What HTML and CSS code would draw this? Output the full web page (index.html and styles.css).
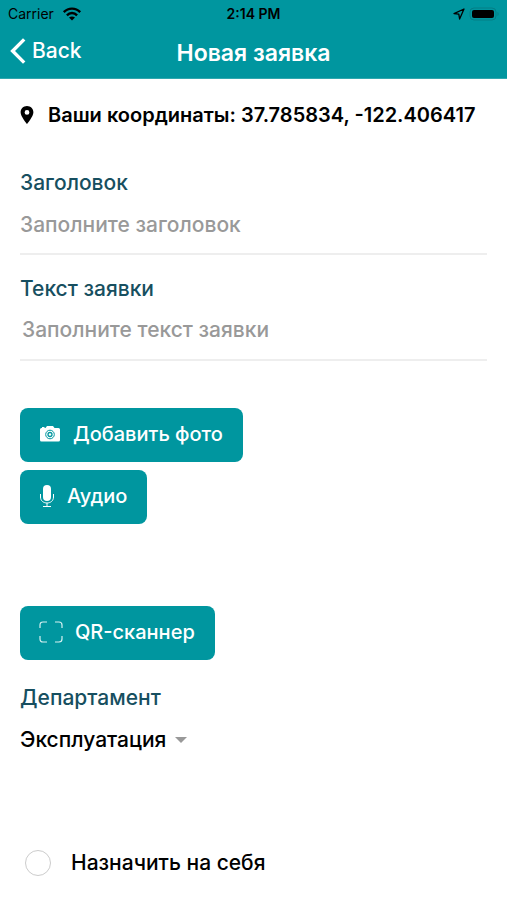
FILE: index.html
```html
<!DOCTYPE html>
<html lang="ru">
<head>
    <meta charset="UTF-8">
    <meta name="viewport" content="width=device-width, initial-scale=1.0">
    <title>Новая заявка</title>
    <link rel="stylesheet" href="styles.css">
</head>
<body>
    <header class="header">
        <div class="status-bar">
            <div class="status-left">
                <span>Carrier</span>
                <svg width="20" height="14" viewBox="0 0 20 14" fill="none" stroke="#000" stroke-width="2.4">
                    <path d="M1.8 5.2C6.4 .4 13.6 .4 18.2 5.2"/>
                    <path d="M4.9 8.3C7.8 5.3 12.2 5.3 15.1 8.3"/>
                    <path d="M10 13.6L7 10.6C8.7 9 11.3 9 13 10.6Z" fill="#000" stroke="none"/>
                </svg>
            </div>
            <span class="status-time">2:14 PM</span>
            <div class="status-right">
                <svg width="12" height="12" viewBox="0 0 12 12" fill="none" stroke="#000" stroke-width="1.3" stroke-linejoin="round">
                    <path d="M11 1L1 5.6L5.8 6.2L6.6 11Z"/>
                </svg>
                <svg width="30" height="14" viewBox="0 0 30 14">
                    <rect x="1" y="1" width="26" height="12" rx="4" fill="none" stroke="#047e86"/>
                    <rect x="3" y="3" width="22" height="8" rx="2" fill="#000"/>
                    <path d="M28.5 5C30 5.5 30 8.5 28.5 9Z" fill="#047e86"/>
                </svg>
            </div>
        </div>
        <nav class="nav-bar">
            <a class="back" href="#">
                <svg width="16" height="26" viewBox="0 0 16 26" fill="none" stroke="#fff" stroke-width="3.4">
                    <path d="M14.2 1.4L2.6 13L14.2 24.6"/>
                </svg>
                <span>Back</span>
            </a>
            <h1>Новая заявка</h1>
        </nav>
    </header>

    <main class="content">
        <div class="location">
            <svg width="14" height="18" viewBox="0 0 14 18">
                <path fill="#000" fill-rule="evenodd" d="M7 0C3.3 0 .6 2.8 .6 6.3C.6 10.6 7 18 7 18S13.4 10.6 13.4 6.3C13.4 2.8 10.7 0 7 0ZM7 4A2.4 2.4 0 1 1 7 8.8A2.4 2.4 0 1 1 7 4Z"/>
            </svg>
            <span>Ваши координаты: 37.785834, -122.406417</span>
        </div>

        <form class="request-form">
            <div class="field">
                <label for="title">Заголовок</label>
                <input type="text" id="title" placeholder="Заполните заголовок">
            </div>
            <div class="field">
                <label for="text">Текст заявки</label>
                <textarea id="text" rows="1" placeholder="Заполните текст заявки"></textarea>
            </div>

            <div class="attachments">
                <button type="button" class="btn">
                    <svg width="22" height="18" viewBox="0 0 22 18">
                        <path fill="#fff" d="M2.5 3H3V2H5.5V3H6.5L8 1H14L15.5 3H19.5Q21 3 21 4.5V15Q21 16.5 19.5 16.5H2.5Q1 16.5 1 15V4.5Q1 3 2.5 3Z"/>
                        <circle cx="11" cy="9.5" r="4.3" fill="none" stroke="#00969f" stroke-width="1"/>
                        <circle cx="11" cy="9.5" r="2" fill="none" stroke="#00969f" stroke-width="1.3"/>
                    </svg>
                    <span>Добавить фото</span>
                </button>
                <button type="button" class="btn">
                    <svg width="16" height="24" viewBox="0 0 16 24">
                        <rect x="4" y="1" width="8" height="16" rx="4" fill="#fff"/>
                        <path d="M1.5 10V13C1.5 21 14.5 21 14.5 13V10M8 19V22.5M4 22.5H12" fill="none" stroke="#fff"/>
                    </svg>
                    <span>Аудио</span>
                </button>
            </div>

            <button type="button" class="btn btn-qr">
                <svg width="24" height="22" viewBox="0 0 24 22" fill="none" stroke="#d5f0f1" stroke-width="1.2">
                    <path d="M1 7V4Q1 1 4 1H8M16 1H20Q23 1 23 4V7M23 15V18Q23 21 20 21H16M8 21H4Q1 21 1 18V15"/>
                </svg>
                <span>QR-сканнер</span>
            </button>

            <div class="department">
                <label for="department">Департамент</label>
                <div class="select-row">
                    <select id="department">
                        <option>Эксплуатация</option>
                    </select>
                    <span class="arrow"></span>
                </div>
            </div>

            <label class="assign">
                <input type="radio" name="assign">
                <span>Назначить на себя</span>
            </label>
        </form>
    </main>
</body>
</html>
```
FILE: styles.css
```css
* {
    box-sizing: border-box;
}
body {
    margin: 0;
    background: #fff;
    color: #000;
    font-family: Inter, "Open Sans", sans-serif;
    font-size: 21px;
    font-weight: 500;
    line-height: 24px;
}
svg {
    flex: none;
}
.header {
    background: #00969f;
    border-bottom: 1px solid #2fa8af;
}
.status-bar {
    display: grid;
    grid-template-columns: 1fr auto 1fr;
    align-items: center;
    height: 27px;
    padding: 0 8px;
    font-size: 14px;
    font-weight: 400;
}
.status-left, .status-right {
    display: flex;
    align-items: center;
    gap: 8px;
}
.status-right {
    justify-content: flex-end;
    gap: 4px;
}
.status-time {
    font-weight: 600;
}
.nav-bar {
    display: grid;
    grid-template-columns: 1fr auto 1fr;
    align-items: center;
    height: 51px;
    padding: 0 10px;
    color: #fff;
}
.back {
    display: flex;
    align-items: center;
    gap: 6px;
    padding-bottom: 4px;
    color: #fff;
    text-decoration: none;
}
h1 {
    margin: 0;
    font-size: 23px;
    font-weight: 600;
}
.content {
    padding: 24px 20px;
}
.location {
    display: flex;
    align-items: center;
    gap: 14px;
    font-size: 20px;
    font-weight: 600;
    white-space: nowrap;
}
.request-form {
    margin-top: 44px;
}
.field {
    display: flex;
    flex-direction: column;
    margin-bottom: 22px;
}
.field label, .department label {
    color: #174f60;
}
.field input, .field textarea {
    width: 100%;
    height: 60px;
    padding: 18px 0;
    border: none;
    border-bottom: 2px solid #eee;
    border-radius: 0;
    outline: none;
    background: none;
    color: #000;
    font: inherit;
    resize: none;
    overflow: hidden;
}
.field textarea {
    padding: 17px 2px;
}
::placeholder {
    color: #999;
    opacity: 1;
}
.attachments {
    display: flex;
    flex-direction: column;
    align-items: flex-start;
    gap: 8px;
    margin-top: 47px;
}
.btn {
    display: flex;
    align-items: center;
    gap: 12px;
    height: 54px;
    padding: 0 20px 3px 19px;
    border: none;
    border-radius: 8px;
    background: #00969f;
    color: #fff;
    font: inherit;
    font-size: 20px;
    cursor: pointer;
}
.btn-qr {
    margin-top: 82px;
}
.department {
    margin-top: 26px;
}
.select-row {
    display: flex;
    align-items: center;
    gap: 8px;
    margin-top: 18px;
}
select {
    appearance: none;
    padding: 0;
    border: none;
    outline: none;
    background: none;
    color: #000;
    font: inherit;
}
.arrow {
    border: 6px solid transparent;
    border-top-color: #999;
    border-bottom: none;
}
.assign {
    display: flex;
    align-items: center;
    gap: 20px;
    margin-top: 98px;
    padding-left: 5px;
}
.assign input {
    appearance: none;
    width: 26px;
    height: 26px;
    margin: 0;
    border: 1px solid #ccc;
    border-radius: 50%;
}
.assign input:checked {
    background: #00969f;
}
```
